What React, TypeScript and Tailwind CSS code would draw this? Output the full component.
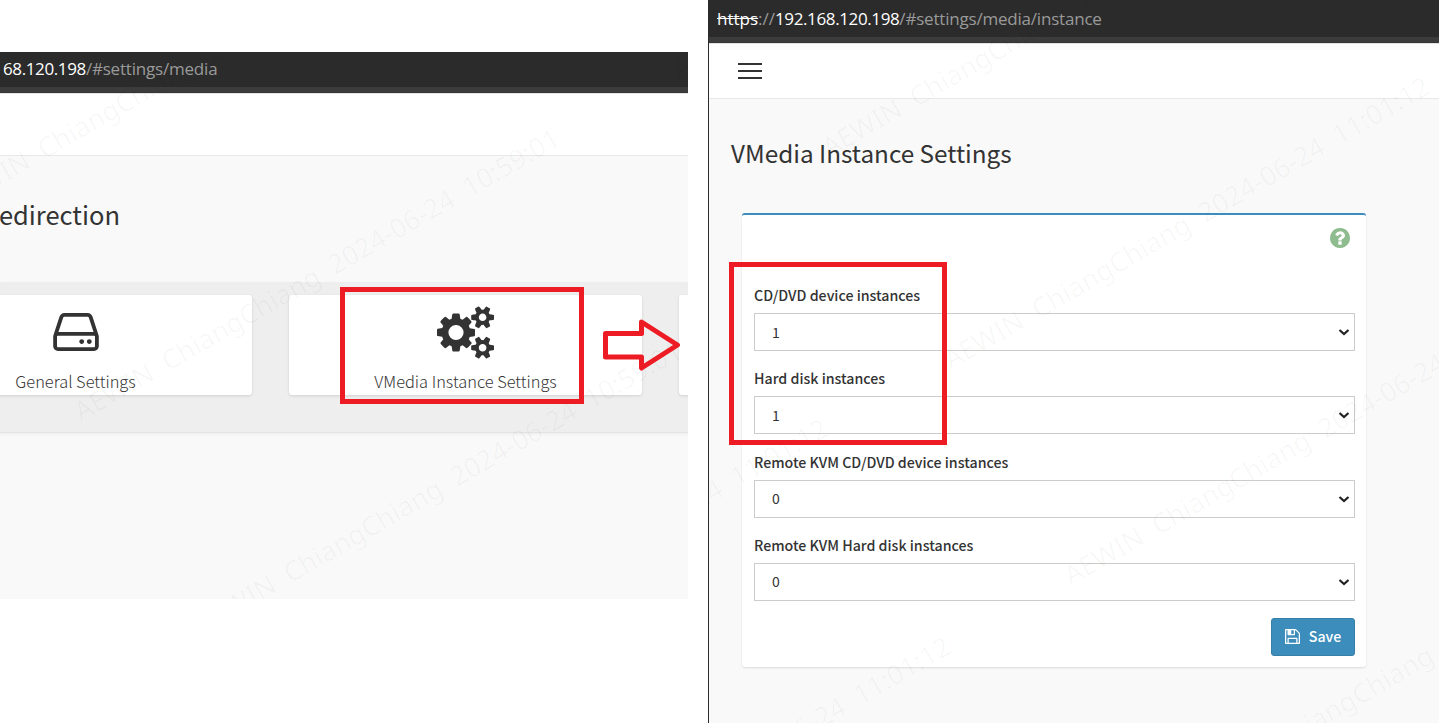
import React from "react";

const SANS = "font-['Noto_Sans_CJK_SC','Noto_Sans',sans-serif]";
const URL_FONT = "font-['Open_Sans','Noto_Sans',sans-serif]";

function CogsIcon() {
  return (
    <svg className="mt-px h-[57px] w-[57px] overflow-visible" viewBox="0 -320 1920 1920" fill="currentColor" aria-hidden="true">
      <path d="M896 640q0-106-75-181t-181-75-181 75-75 181 75 181 181 75 181-75 75-181zm768 512q0-52-38-90t-90-38-90 38-38 90q0 53 37.5 90.5t90.5 37.5 90.5-37.5 37.5-90.5zm0-1024q0-52-38-90t-90-38-90 38-38 90q0 53 37.5 90.5t90.5 37.5 90.5-37.5 37.5-90.5zm-384 421v185q0 10-7 19.5t-16 10.5l-155 24q-11 35-32 76 34 48 90 115 7 11 7 20 0 12-7 19-23 30-82.5 89.5t-78.5 59.5q-11 0-21-7l-115-90q-37 19-77 31-11 108-23 155-7 24-30 24h-186q-11 0-20-7.5t-10-17.5l-23-153q-34-10-75-31l-118 89q-7 7-20 7-11 0-21-8-144-133-144-160 0-9 7-19 10-14 41-53t47-61q-23-44-35-82l-152-24q-10-1-17-9.5t-7-19.5v-185q0-10 7-19.5t16-10.5l155-24q11-35 32-76-34-48-90-115-7-11-7-20 0-12 7-20 22-30 82-89t79-59q11 0 21 7l115 90q34-18 77-32 11-108 23-154 7-24 30-24h186q11 0 20 7.5t10 17.5l23 153q34 10 75 31l118-89q8-7 20-7 11 0 21 8 144 133 144 160 0 8-7 19-12 16-42 54t-45 60q23 48 34 82l152 23q10 2 17 10.5t7 19.5zm640 533v140q0 16-149 31-12 27-30 52 51 113 51 138 0 4-4 7-122 71-124 71-8 0-46-47t-52-68q-20 2-30 2t-30-2q-14 21-52 68t-46 47q-2 0-124-71-4-3-4-7 0-25 51-138-18-25-30-52-149-15-149-31v-140q0-16 149-31 13-29 30-52-51-113-51-138 0-4 4-7 4-2 35-20t59-34 30-16q8 0 46 46.5t52 67.5q20-2 30-2t30 2q51-71 92-112l6-2q4 0 124 70 4 3 4 7 0 25-51 138 17 23 30 52 149 15 149 31zm0-1024v140q0 16-149 31-12 27-30 52 51 113 51 138 0 4-4 7-122 71-124 71-8 0-46-47t-52-68q-20 2-30 2t-30-2q-14 21-52 68t-46 47q-2 0-124-71-4-3-4-7 0-25 51-138-18-25-30-52-149-15-149-31v-140q0-16 149-31 13-29 30-52-51-113-51-138 0-4 4-7 4-2 35-20t59-34 30-16q8 0 46 46.5t52 67.5q20-2 30-2t30 2q51-71 92-112l6-2q4 0 124 70 4 3 4 7 0 25-51 138 17 23 30 52 149 15 149 31z" />
    </svg>
  );
}

function DiskIcon() {
  return (
    <svg className="h-[38px] w-[46px]" viewBox="128 256 1536 1280" fill="currentColor" aria-hidden="true">
      <path d="M1168 1216q0 33-23.5 56.5t-56.5 23.5-56.5-23.5-23.5-56.5 23.5-56.5 56.5-23.5 56.5 23.5 23.5 56.5zm256 0q0 33-23.5 56.5t-56.5 23.5-56.5-23.5-23.5-56.5 23.5-56.5 56.5-23.5 56.5 23.5 23.5 56.5zm112 160v-320q0-13-9.5-22.5t-22.5-9.5h-1216q-13 0-22.5 9.5t-9.5 22.5v320q0 13 9.5 22.5t22.5 9.5h1216q13 0 22.5-9.5t9.5-22.5zm-1230-480h1180l-157-482q-4-13-16-21.5t-26-8.5h-782q-14 0-26 8.5t-16 21.5zm1358 160v320q0 66-47 113t-113 47h-1216q-66 0-113-47t-47-113v-320q0-25 16-75l197-606q17-53 63-86t101-33h782q55 0 101 33t63 86l197 606q16 50 16 75z" />
    </svg>
  );
}

function FloppyIcon() {
  return (
    <svg className="size-[15px]" viewBox="128 128 1536 1536" fill="currentColor" aria-hidden="true">
      <path d="M512 1536h768v-384h-768v384zm896 0h128v-896q0-14-10-38.5t-20-34.5l-281-281q-10-10-34-20t-39-10v416q0 40-28 68t-68 28h-576q-40 0-68-28t-28-68v-416h-128v1280h128v-416q0-40 28-68t68-28h832q40 0 68 28t28 68v416zm-384-928v-320q0-13-9.5-22.5t-22.5-9.5h-192q-13 0-22.5 9.5t-9.5 22.5v320q0 13 9.5 22.5t22.5 9.5h192q13 0 22.5-9.5t9.5-22.5zm640 32v928q0 40-28 68t-68 28h-1344q-40 0-68-28t-28-68v-1344q0-40 28-68t68-28h928q40 0 88 20t76 48l280 280q28 28 48 76t20 88z" />
    </svg>
  );
}

function HelpIcon() {
  return (
    <svg className="size-5 text-[#8fbc8f]" viewBox="128 128 1536 1536" fill="currentColor" aria-hidden="true">
      <path d="M1024 1376v-192q0-14-9-23t-23-9h-192q-14 0-23 9t-9 23v192q0 14 9 23t23 9h192q14 0 23-9t9-23zm256-672q0-88-55.5-163t-138.5-116-170-41q-243 0-371 213-15 24 8 42l132 100q7 6 19 6 16 0 25-12 53-68 86-92 34-24 86-24 48 0 85.5 26t37.5 59q0 38-20 61t-68 45q-63 28-115.5 86.5t-52.5 125.5v36q0 14 9 23t23 9h192q14 0 23-9t9-23q0-19 21.5-49.5t54.5-49.5q32-18 49-28.5t46-35 44.5-48 28-60.5 12.5-81zm384 192q0 209-103 385.5t-279.5 279.5-385.5 103-385.5-103-279.5-279.5-103-385.5 103-385.5 279.5-279.5 385.5-103 385.5 103 279.5 279.5 103 385.5z" />
    </svg>
  );
}

function Watermark({ text, starts }: { text: string; starts: [number, number][] }) {
  return (
    <div className="pointer-events-none absolute inset-0 overflow-hidden" aria-hidden="true">
      {starts.map(([left, top]) => (
        <span
          key={`${left}-${top}`}
          style={{ left, top }}
          className="absolute origin-bottom-left -rotate-30 whitespace-pre font-['Noto_Sans',sans-serif] text-[27px] leading-[20px] text-black/[0.031]"
        >
          {text}
        </span>
      ))}
    </div>
  );
}

function BarEdge() {
  return (
    <>
      <div className="h-[5px] bg-[#3c3c3c]" />
      <div className="h-px bg-[#373535]" />
      <div className="h-px bg-[#e4e4e4]" />
    </>
  );
}

function Card({ className, label, children }: { className: string; label?: string; children?: React.ReactNode }) {
  return (
    <div className={`flex h-[100px] shrink-0 flex-col items-center rounded-[3px] bg-white shadow-[0_1px_3px_rgba(0,0,0,0.12)] ${className}`}>
      <div className="flex h-[73px] items-center">{children}</div>
      {label && <span className="mt-px whitespace-nowrap text-[16.4px] font-light leading-[24px]">{label}</span>}
    </div>
  );
}

function MediaWindow() {
  return (
    <section className="relative mt-[52px] flex h-[547px] w-[688px] shrink-0 flex-col overflow-hidden bg-[#f9f9f9]">
      <div className={`flex h-[35px] items-center bg-[#2b2b2b] pb-[2px] pl-[3px] text-[17px] text-[#9a9a9a] ${URL_FONT}`}>
        <span className="tracking-[-0.38px] text-white">68.120.198</span>
        <span className="tracking-[-0.2px]">/#settings/media</span>
      </div>
      <BarEdge />
      <div className="h-[62px] border-b border-[#e8e8e8] bg-white" />
      <h1 className="-ml-[17px] mt-[38px] h-[40px] whitespace-nowrap text-[25.5px] leading-[40px]">Redirection</h1>
      <div className="mt-[48px] flex h-[151px] gap-[37px] border-b border-[#e4e4e4] bg-[#eee] pt-[13px] shadow-[0_1px_3px_rgba(0,0,0,0.06)]">
        <Card className="-ml-[101px] w-[353px]" label="General Settings">
          <DiskIcon />
        </Card>
        <Card className="w-[353px]" label="VMedia Instance Settings">
          <CogsIcon />
        </Card>
        <Card className="w-[353px]" />
      </div>
      <Watermark
        text="AEWIN  ChiangChiang  2024-06-24  10:59:01"
        starts={[[-43, 138], [81, 350], [203, 562], [679, 8]]}
      />
      <div className="absolute left-[340px] top-[235px] h-[117px] w-[244px] border-[5px] border-[#ed1c24]" />
      <svg className="absolute left-[600px] top-[264px] h-[58px] w-[84px]" viewBox="600 316 84 58" fill="none" stroke="#ed1c24" strokeWidth="5" strokeLinejoin="round">
        <path d="M605.500 333.500H641.500V322L677.500 345L641.500 368V357H605.500Z" />
      </svg>
    </section>
  );
}

function Field({ label, value }: { label: string; value: string }) {
  return (
    <label className="block h-[83.300px]">
      <span className="flex h-[35px] items-center whitespace-nowrap pb-px text-[14.2px] font-medium leading-[34px]">{label}</span>
      <span className="relative block">
        <select className="block h-[38px] w-full appearance-none border border-[#ccc] bg-white pl-[17px] text-[14px] outline-none">
          <option>{value}</option>
        </select>
        <svg className="absolute right-[5px] top-[15px] h-[8px] w-[12px]" viewBox="0 0 12 8" fill="none" stroke="#222" strokeWidth="2.200">
          <path d="M1.500 2L6 6L10.500 2" />
        </svg>
      </span>
    </label>
  );
}

const FIELDS = [
  { label: "CD/DVD device instances", value: "1" },
  { label: "Hard disk instances", value: "1" },
  { label: "Remote KVM CD/DVD device instances", value: "0" },
  { label: "Remote KVM Hard disk instances", value: "0" },
];

function InstanceWindow() {
  return (
    <section className="relative ml-[20px] flex h-[723px] w-[731px] shrink-0 flex-col overflow-hidden border-l border-[#2b2b2b] bg-[#f9f9f9]">
      <div className={`flex h-[37px] items-center bg-[#2b2b2b] pl-[8px] text-[17px] text-[#9a9a9a] ${URL_FONT}`}>
        <span className="text-white line-through">https</span>
        <span>://</span>
        <span className="tracking-[-0.38px] text-white">192.168.120.198</span>
        <span className="tracking-[-0.2px]">/#settings/media/instance</span>
      </div>
      <BarEdge />
      <div className="flex h-[55px] items-center border-b border-[#e8e8e8] bg-white pl-[29px]">
        <button className="flex w-[24px] flex-col gap-[5px]" aria-label="Menu">
          <span className="h-[2px] bg-[#333]" />
          <span className="h-[2px] bg-[#333]" />
          <span className="h-[2px] bg-[#333]" />
        </button>
      </div>
      <h1 className="ml-[22px] mt-[34px] h-[40px] whitespace-nowrap text-[24.3px] leading-[40px]">VMedia Instance Settings</h1>
      <div className="ml-[33px] mt-[40px] h-[454px] w-[624px] rounded-[3px] border-t-2 border-[#3c8dbc] bg-white px-[12px] shadow-[0_1px_2px_rgba(0,0,0,0.12)]">
        <div className="flex h-[63px] justify-end pr-[4px] pt-[13px]">
          <HelpIcon />
        </div>
        <form className="w-[601px]">
          {FIELDS.map((field) => (
            <Field key={field.label} {...field} />
          ))}
          <div className="mt-[7px] flex justify-end">
            <button type="button" className="flex h-[38px] w-[84px] items-center justify-center gap-[9px] rounded-[3px] border border-[#367fa9] bg-[#3c8dbc] pb-px text-[14.2px] font-medium text-white">
              <FloppyIcon />
              Save
            </button>
          </div>
        </form>
      </div>
      <Watermark
        text="AEWIN  ChiangChiang  2024-06-24  11:01:12"
        starts={[[120, 138], [242, 350], [362, 566], [-360, 692], [-237, 910], [485, 781]]}
      />
      <div className="absolute left-[20px] top-[262px] h-[183px] w-[218px] border-[5px] border-[#ed1c24]" />
    </section>
  );
}

export default function App() {
  return (
    <main className={`flex h-[723px] w-[1439px] items-start overflow-hidden bg-white text-[#333] ${SANS}`}>
      <MediaWindow />
      <InstanceWindow />
    </main>
  );
}
